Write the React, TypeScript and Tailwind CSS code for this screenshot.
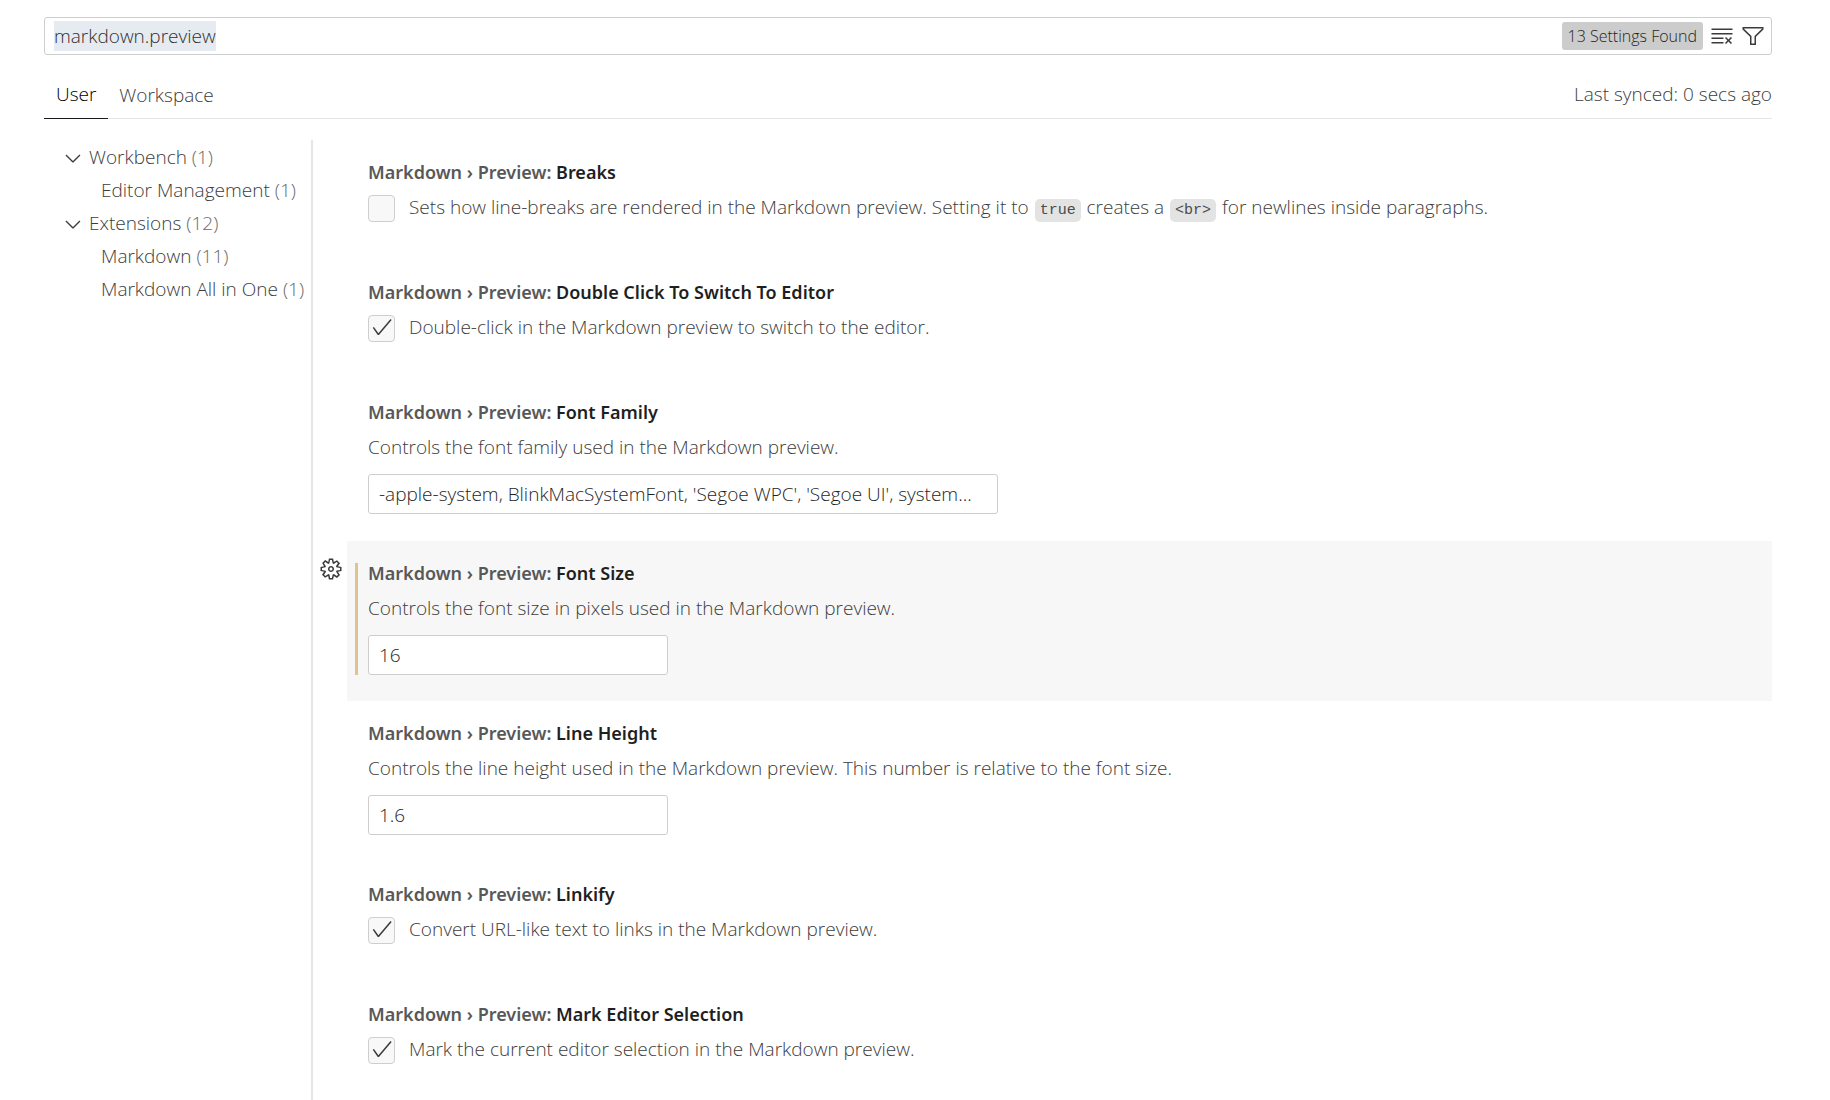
import { useEffect, useRef, useState, type ReactNode } from "react";
import { VscCheck, VscChevronDown, VscClearAll, VscFilter, VscGear } from "react-icons/vsc";

function Code({ children }: { children: ReactNode }) {
  return (
    <code className="mx-px rounded-[5px] bg-[#e3e3e3] px-[5px] py-[3px] font-['Liberation_Mono',monospace] text-[15px] leading-none font-normal text-[#4b4b4b]">
      {children}
    </code>
  );
}

function Title({ name }: { name: string }) {
  return (
    <h3 className="font-['Noto_Sans','Open_Sans',sans-serif] text-[18px] leading-7 font-semibold text-[#585858]">
      Markdown › Preview: <span className="text-[#1f1f1f]">{name}</span>
    </h3>
  );
}

function CheckSetting({ id, name, checked, children }: { id: string; name: string; checked?: boolean; children: ReactNode }) {
  const [on, setOn] = useState(!!checked);
  return (
    <section className="flex flex-col gap-[7px] pt-[18px] pr-5 pb-[38px] pl-[21px]">
      <Title name={name} />
      <div className="flex items-start gap-[14px]">
        <span className="mt-[2px] grid size-[27px] shrink-0">
          <input
            id={id}
            type="checkbox"
            checked={on}
            onChange={() => setOn(!on)}
            className="col-start-1 row-start-1 size-[27px] appearance-none rounded-[4px] border border-[#cecece] bg-[#f8f8f8]"
          />
          {on && <VscCheck className="pointer-events-none col-start-1 row-start-1 size-6 self-start justify-self-center text-[#3b3b3b]" />}
        </span>
        <label htmlFor={id} className="leading-7">
          {children}
        </label>
      </div>
    </section>
  );
}

function TextSetting({
  id,
  name,
  description,
  value,
  wide,
  active,
}: {
  id: string;
  name: string;
  description: string;
  value: string;
  wide?: boolean;
  active?: boolean;
}) {
  return (
    <section className={active ? "relative bg-[#f7f7f7] pt-[18px] pr-5 pb-[26px] pl-[21px]" : "relative pt-[18px] pr-5 pb-[27px] pl-[21px]"}>
      {active && (
        <>
          <button type="button" aria-label="More actions" className="absolute top-4 -left-7 text-[#3b3b3b]">
            <VscGear className="size-6" />
          </button>
          <div className="absolute top-[22px] bottom-[26px] left-2 w-[3px] bg-[#e0c48f]" />
        </>
      )}
      <Title name={name} />
      <label htmlFor={id} className="mt-[7px] block leading-7">
        {description}
      </label>
      <input
        id={id}
        type="text"
        defaultValue={value}
        className={
          wide
            ? "mt-[13px] block h-10 w-[630px] max-w-full rounded-[3px] border border-[#cecece] bg-white px-[10px] text-ellipsis text-[#1f1f1f]"
            : "mt-[13px] block h-10 w-[300px] max-w-full rounded-[3px] border border-[#cecece] bg-white px-[10px] text-[#1f1f1f]"
        }
      />
    </section>
  );
}

function TreeGroup({ label, count, items }: { label: string; count: number; items: [string, number][] }) {
  return (
    <li>
      <button type="button" className="flex h-[33px] items-center gap-1 pl-[17px] whitespace-nowrap">
        <VscChevronDown className="size-6" />
        <span>
          {label} <span className="text-[#6a6a6a]">({count})</span>
        </span>
      </button>
      <ul>
        {items.map(([name, n]) => (
          <li key={name}>
            <button type="button" className="flex h-[33px] items-center pl-[57px] whitespace-nowrap">
              <span>
                {name} <span className="text-[#6a6a6a]">({n})</span>
              </span>
            </button>
          </li>
        ))}
      </ul>
    </li>
  );
}

export default function App() {
  const search = useRef<HTMLInputElement>(null);
  useEffect(() => {
    search.current?.focus();
    search.current?.select();
  }, []);

  return (
    <div className="flex h-screen flex-col overflow-hidden bg-white pt-[17px] pr-[58px] pl-11 font-['Open_Sans','Noto_Sans',sans-serif] text-[19px] font-light text-[#3c3c3c]">
      <div className="flex h-[38px] shrink-0 items-center gap-[7px] rounded-[3px] border border-[#cecece] pr-[6px] pl-[9px]">
        <input
          ref={search}
          type="text"
          aria-label="Search settings"
          defaultValue="markdown.preview"
          className="h-[30px] min-w-0 flex-1 leading-[30px] text-[#303030] outline-none selection:bg-[#e5ebf1] selection:text-[#303030]"
        />
        <span className="rounded-[3px] bg-[#cccccc] px-[6px] text-[16px] leading-7 text-[#1f1f1f]">13 Settings Found</span>
        <button type="button" aria-label="Clear search" className="text-[#3b3b3b]">
          <VscClearAll className="size-6" />
        </button>
        <button type="button" aria-label="Filter settings" className="text-[#3b3b3b]">
          <VscFilter className="size-6" />
        </button>
      </div>

      <header className="mt-4 flex h-12 shrink-0 items-stretch border-b border-[#e5e5e5]">
        <nav className="-mb-px flex">
          <button type="button" className="border-b border-[#1a1a1a] px-3 text-black">
            User
          </button>
          <button type="button" className="px-[11px]">
            Workspace
          </button>
        </nav>
        <span className="ml-auto self-center">Last synced: 0 secs ago</span>
      </header>

      <div className="mt-[21px] flex min-h-0 flex-1">
        <aside className="w-[269px] shrink-0 border-r-2 border-[#e5e5e5]">
          <ul className="pt-px">
            <TreeGroup label="Workbench" count={1} items={[["Editor Management", 1]]} />
            <TreeGroup label="Extensions" count={12} items={[["Markdown", 11], ["Markdown All in One", 1]]} />
          </ul>
        </aside>
        <main className="ml-[34px] min-w-0 flex-1">
          <CheckSetting id="breaks" name="Breaks">
            Sets how line-breaks are rendered in the Markdown preview. Setting it to <Code>true</Code> creates a{" "}
            <Code>&lt;br&gt;</Code> for newlines inside paragraphs.
          </CheckSetting>
          <CheckSetting id="dblclick" name="Double Click To Switch To Editor" checked>
            Double-click in the Markdown preview to switch to the editor.
          </CheckSetting>
          <TextSetting
            id="font-family"
            name="Font Family"
            description="Controls the font family used in the Markdown preview."
            value="-apple-system, BlinkMacSystemFont, 'Segoe WPC', 'Segoe UI', system..."
            wide
          />
          <TextSetting
            id="font-size"
            name="Font Size"
            description="Controls the font size in pixels used in the Markdown preview."
            value="16"
            active
          />
          <TextSetting
            id="line-height"
            name="Line Height"
            description="Controls the line height used in the Markdown preview. This number is relative to the font size."
            value="1.6"
          />
          <CheckSetting id="linkify" name="Linkify" checked>
            Convert URL-like text to links in the Markdown preview.
          </CheckSetting>
          <CheckSetting id="mark-selection" name="Mark Editor Selection" checked>
            Mark the current editor selection in the Markdown preview.
          </CheckSetting>
        </main>
      </div>
    </div>
  );
}
